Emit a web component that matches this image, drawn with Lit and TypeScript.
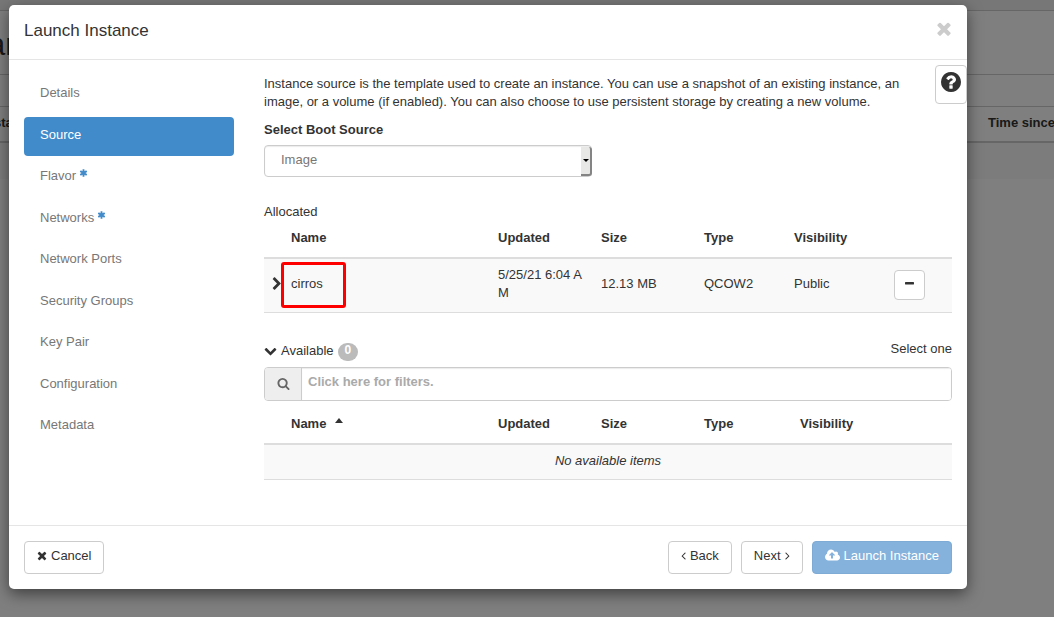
import { LitElement, html, css, nothing } from "lit";
import { customElement } from "lit/decorators.js";
import { classMap } from "lit/directives/class-map.js";

interface Glyph {
  box: string;
  d: string;
}

const GLYPHS: Record<string, Glyph> = {
  times: {
    box: "192 128 1408 1792",
    d: "M1490 1322q0 40-28 68l-136 136q-28 28-68 28t-68-28l-294-294-294 294q-28 28-68 28t-68-28l-136-136q-28-28-28-68t28-68l294-294-294-294q-28-28-28-68t28-68l136-136q28-28 68-28t68 28l294 294 294-294q28-28 68-28t68 28l136 136q28 28 28 68t-28 68l-294 294 294 294q28 28 28 68z",
  },
  chevronRight: {
    box: "256 0 1280 1792",
    d: "M1363 877l-742 742q-19 19-45 19t-45-19l-166-166q-19-19-19-45t19-45l531-531-531-531q-19-19-19-45t19-45l166-166q19-19 45-19t45 19l742 742q19 19 19 45t-19 45z",
  },
  chevronDown: {
    box: "0 128 1792 1792",
    d: "M1683 808l-742 741q-19 19-45 19t-45-19l-742-741q-19-19-19-45.500t19-45.500l166-165q19-19 45-19t45 19l531 531 531-531q19-19 45-19t45 19l166 165q19 19 19 45.500t-19 45.500z",
  },
  search: {
    box: "0 128 1792 1792",
    d: "M1216 832q0-185-131.500-316.500t-316.500-131.500-316.500 131.500-131.500 316.500 131.500 316.500 316.500 131.500 316.500-131.500 131.500-316.500zm512 832q0 52-38 90t-90 38q-54 0-90-38l-343-342q-179 124-399 124-143 0-273.500-55.500t-225-150-150-225-55.500-273.500 55.500-273.500 150-225 225-150 273.500-55.500 273.500 55.500 225 150 150 225 55.500 273.500q0 220-124 399l343 343q37 37 37 90z",
  },
  question: {
    box: "128 128 1536 1536",
    d: "M1024 1376v-192q0-14-9-23t-23-9h-192q-14 0-23 9t-9 23v192q0 14 9 23t23 9h192q14 0 23-9t9-23zm256-672q0-88-55.500-163t-138.500-116-170-41q-243 0-371 213-15 24 8 42l132 100q7 6 19 6 16 0 25-12 53-68 86-92 34-24 86-24 48 0 85.500 26t37.500 59q0 38-20 61t-68 45q-63 28-115.500 86.500t-52.500 125.500v36q0 14 9 23t23 9h192q14 0 23-9t9-23q0-19 21.500-49.500t54.500-49.500q32-18 49-28.500t46-35 44.500-48 28-60.500 12.500-81zm384 192q0 209-103 385.500t-279.500 279.500-385.500 103-385.500-103-279.500-279.500-103-385.500 103-385.500 279.500-279.500 385.500-103 385.500 103 279.500 279.500 103 385.500z",
  },
  minus: {
    box: "192 128 1408 1792",
    d: "M1600 736v192q0 40-28 68t-68 28h-1216q-40 0-68-28t-28-68v-192q0-40 28-68t68-28h1216q40 0 68 28t28 68z",
  },
  angleLeft: {
    box: "544 128 704 1792",
    d: "M1203 544q0 13-10 23l-393 393 393 393q10 10 10 23t-10 23l-50 50q-10 10-23 10t-23-10l-466-466q-10-10-10-23t10-23l466-466q10-10 23-10t23 10l50 50q10 10 10 23z",
  },
  angleRight: {
    box: "544 128 704 1792",
    d: "M1171 960q0 13-10 23l-466 466q-10 10-23 10t-23-10l-50-50q-10-10-10-23t10-23l393-393-393-393q-10-10-10-23t10-23l50-50q10-10 23-10t23 10l466 466q10 10 10 23z",
  },
  asterisk: {
    box: "192 128 1408 1536",
    d: "M1546 1050q46 26 59.500 77.500t-12.500 97.500l-64 110q-26 46-77.500 59.500t-97.500-12.500l-266-153v307q0 52-38 90t-90 38h-128q-52 0-90-38t-38-90v-307l-266 153q-46 26-97.500 12.500t-77.500-59.500l-64-110q-26-46-12.500-97.500t59.500-77.500l266-154-266-154q-46-26-59.500-77.500t12.500-97.500l64-110q26-46 77.500-59.500t97.500 12.500l266 153v-307q0-52 38-90t90-38h128q52 0 90 38t38 90v307l266-153q46-26 97.500-12.500t77.500 59.500l64 110q26 46 12.500 97.500t-59.500 77.500l-266 154z",
  },
  cloudUpload: {
    box: "-64 64 1920 1792",
    d: "M1216 864q0-14-9-23l-352-352q-9-9-23-9t-23 9l-351 351q-10 12-10 24 0 14 9 23t23 9h224v352q0 13 9.500 22.500t22.500 9.500h192q13 0 22.500-9.500t9.500-22.500v-352h224q13 0 22.500-9.500t9.500-22.500zm640 288q0 159-112.500 271.500t-271.500 112.500h-1088q-185 0-316.500-131.500t-131.500-316.500q0-130 70-240t188-165q-2-30-2-43 0-212 150-362t362-150q156 0 285.500 87t188.500 231q71-62 166-62 106 0 181 75t75 181q0 76-41 138 130 31 213.500 135.500t83.500 238.500z",
  },
  caretUp: { box: "0 0 8 5", d: "M0 5L4 0L8 5z" },
};

const icon = (name: string, width: number, height: number) => html`<svg
  class="icon"
  width=${width}
  height=${height}
  viewBox=${GLYPHS[name].box}
  aria-hidden="true"
><path fill="currentColor" d=${GLYPHS[name].d}></path></svg>`;

const STEPS = [
  { label: "Details" },
  { label: "Source", active: true },
  { label: "Flavor", required: true },
  { label: "Networks", required: true },
  { label: "Network Ports" },
  { label: "Security Groups" },
  { label: "Key Pair" },
  { label: "Configuration" },
  { label: "Metadata" },
];

@customElement("app-root")
export class AppRoot extends LitElement {
  static styles = css`
    :host {
      display: block;
      position: relative;
      min-height: 100vh;
      overflow: hidden;
      background: #fff;
      color: #333;
      font: 13px/18px "Liberation Sans", Arial, sans-serif;
    }
    * {
      box-sizing: border-box;
    }
    button,
    input,
    select {
      font: inherit;
      color: inherit;
      margin: 0;
    }
    .icon {
      display: block;
      flex: none;
    }

    /* page under the dialog */
    .topbar {
      height: 11px;
      background: #efefef;
      border-bottom: 1px solid #ccc;
    }
    .page-title {
      height: 64px;
      border-bottom: 1px solid #ccc;
      font-size: 31px;
      line-height: 36px;
      margin: 0;
      padding-top: 16px;
      font-weight: 400;
      text-indent: -12px;
    }
    .toolbar {
      height: 32px;
      border-bottom: 1px solid #ccc;
    }
    .page-head {
      display: flex;
      justify-content: space-between;
      height: 36px;
      padding-top: 7px;
      border-bottom: 2px solid #ccc;
      font-weight: 700;
      white-space: nowrap;
    }
    .page-head span:first-child {
      text-indent: -6px;
    }
    .page-head span:last-child {
      width: 66px;
    }
    .page-row {
      height: 36px;
      background: #f9f9f9;
    }

    .backdrop {
      position: absolute;
      inset: 0;
      background: rgba(0, 0, 0, 0.5);
      padding: 5px 87px 28px 9px;
    }
    .dialog {
      position: relative;
      background: #fff;
      border-radius: 5px;
      box-shadow: 0 5px 15px rgba(0, 0, 0, 0.5);
    }
    .header {
      display: flex;
      justify-content: space-between;
      align-items: center;
      padding: 14px 15px 16px;
      border-bottom: 1px solid #e5e5e5;
    }
    .title {
      margin: 0;
      font-size: 17px;
      line-height: 24px;
      font-weight: 400;
    }
    .close {
      display: flex;
      border: 0;
      padding: 0 0 2px;
      background: none;
      color: #ccc;
    }
    .help {
      position: absolute;
      top: 60px;
      right: 0;
      width: 32px;
      height: 39px;
      display: flex;
      justify-content: center;
      padding: 6px 0 0;
      border: 1px solid #ccc;
      border-radius: 4px;
      background: #fff;
      color: #333;
    }
    .body {
      display: flex;
      gap: 30px;
      padding: 15px 15px 45px;
    }
    .steps {
      flex: none;
      width: 210px;
      height: 371px;
      margin: 0;
      padding: 0;
      list-style: none;
      display: flex;
      flex-direction: column;
      justify-content: space-between;
    }
    .step {
      display: flex;
      gap: 4px;
      padding: 9px 16px 12px;
      border-radius: 4px;
      color: #777;
      text-decoration: none;
    }
    .step.active {
      background: #428bca;
      color: #fff;
    }
    .required {
      padding-top: 2px;
      color: #428bca;
    }
    .content {
      flex: 1;
      min-width: 0;
    }
    .intro {
      margin: 0 0 10px;
      padding-right: 30px;
    }
    .boot-label {
      display: block;
      font-weight: 700;
      margin-bottom: 6px;
    }
    .select-wrap {
      position: relative;
      width: 328px;
      max-width: 100%;
      height: 32px;
      margin-bottom: 26px;
    }
    .select {
      display: block;
      appearance: none;
      width: 100%;
      height: 32px;
      padding: 0 16px 3px;
      border: 1px solid #ccc;
      border-radius: 4px;
      background: #fff;
      box-shadow: inset 0 1px 1px rgba(0, 0, 0, 0.08);
      color: #777;
    }
    .select-arrow {
      position: absolute;
      top: 2px;
      right: 0;
      width: 11px;
      height: 29px;
      display: flex;
      align-items: center;
      justify-content: center;
      background: #e8e8e6;
      border-right: 2px solid #848484;
      border-bottom: 2px solid #848484;
      border-radius: 0 3px 3px 0;
      pointer-events: none;
    }
    .select-arrow::after {
      content: "";
      border: 3px solid transparent;
      border-top-color: #000;
      border-bottom: 0;
    }
    .table {
      width: 100%;
      table-layout: fixed;
      border-collapse: separate;
      border-spacing: 0;
      text-align: left;
    }
    .table th {
      padding: 8px 0 10px;
      border-bottom: 2px solid #ddd;
      font-weight: 700;
    }
    .table td {
      padding: 7px 0 10px;
      border-bottom: 1px solid #ddd;
      background: #f9f9f9;
    }
    .col-toggle {
      width: 27px;
    }
    .col-mid {
      width: 103px;
    }
    .col-type {
      width: 90px;
    }
    .col-type-wide {
      width: 96px;
    }
    .col-vis {
      width: 100px;
    }
    .col-action {
      width: 58px;
    }
    .col-action-narrow {
      width: 52px;
    }
    .table .wrap {
      padding-right: 16px;
      word-break: break-all;
    }
    .table .empty {
      padding: 7px 0 9px;
      text-align: center;
      font-style: italic;
    }
    .toggle {
      display: flex;
      padding: 0 0 0 8px;
      border: 0;
      background: none;
    }
    .marked {
      position: relative;
    }
    .mark {
      position: absolute;
      top: 3px;
      left: -10px;
      width: 65px;
      height: 46px;
      border: 3px solid #f00;
      border-radius: 3px;
    }
    .btn {
      display: inline-flex;
      align-items: center;
      gap: 4px;
      height: 33px;
      padding: 0 12px 3px;
      border: 1px solid #ccc;
      border-radius: 4px;
      background: #fff;
      white-space: nowrap;
    }
    .btn.small {
      display: flex;
      height: 30px;
      margin-top: 2px;
      padding: 0 10px 2px;
    }
    .btn.primary {
      background: #85b2dc;
      border-color: #7dabd6;
      color: #fff;
    }
    .available {
      display: flex;
      justify-content: space-between;
      margin-top: 27px;
      padding-bottom: 7px;
    }
    .available-title {
      display: flex;
      align-items: flex-start;
      gap: 4px;
      padding-top: 2px;
    }
    .available-title .icon {
      margin-top: 3px;
    }
    .badge {
      height: 18px;
      margin-top: 1px;
      margin-bottom: -1px;
      padding: 0 7px;
      border-radius: 9px;
      background: #bbb;
      color: #fff;
      font-size: 12px;
      line-height: 15px;
      font-weight: 700;
    }
    .filter {
      display: flex;
      height: 34px;
      margin-bottom: 6px;
      border: 1px solid #ccc;
      border-radius: 4px;
      overflow: hidden;
    }
    .filter-icon {
      flex: none;
      display: flex;
      align-items: center;
      justify-content: center;
      width: 37px;
      background: #eee;
      border-right: 1px solid #ccc;
      color: #666;
    }
    .filter-input {
      flex: 1;
      min-width: 0;
      border: 0;
      padding: 0 6px 5px;
      background: #fff;
      box-shadow: inset 0 1px 1px rgba(0, 0, 0, 0.08);
      font-weight: 700;
    }
    .filter-input::placeholder {
      color: #aaa;
      opacity: 1;
    }
    .sorted {
      display: flex;
      gap: 9px;
    }
    .sorted .icon {
      margin-top: 3px;
    }
    .footer {
      display: flex;
      gap: 9px;
      padding: 15px;
      border-top: 1px solid #e5e5e5;
    }
    .footer .btn:first-child {
      margin-right: auto;
    }
  `;

  private headCells(wide: boolean) {
    return html`
      <th scope="col" class="col-toggle"></th>
      <th scope="col">
        ${wide
          ? html`<div class="sorted">Name ${icon("caretUp", 8, 5)}</div>`
          : "Name"}
      </th>
      <th scope="col" class="col-mid">Updated</th>
      <th scope="col" class="col-mid">Size</th>
      <th scope="col" class=${wide ? "col-type-wide" : "col-type"}>Type</th>
      <th scope="col" class="col-vis">Visibility</th>
      <th scope="col" class=${wide ? "col-action-narrow" : "col-action"}></th>
    `;
  }

  render() {
    return html`
      <div aria-hidden="true">
        <div class="topbar"></div>
        <p class="page-title">an</p>
        <div class="toolbar"></div>
        <div class="page-head"><span>sta</span><span>Time since</span></div>
        <div class="page-row"></div>
      </div>
      <div class="backdrop">
        <section class="dialog" role="dialog" aria-labelledby="title">
          <header class="header">
            <h1 class="title" id="title">Launch Instance</h1>
            <button class="close" aria-label="Close">${icon("times", 16, 20)}</button>
          </header>
          <button class="help" aria-label="Help">${icon("question", 20, 20)}</button>
          <div class="body">
            <ul class="steps">
              ${STEPS.map(
                (s) => html`<li>
                  <a href="#" class=${classMap({ step: true, active: !!s.active })}
                    >${s.label}${s.required
                      ? html`<span class="required">${icon("asterisk", 7, 8)}</span>`
                      : nothing}</a
                  >
                </li>`
              )}
            </ul>
            <div class="content">
              <p class="intro">
                Instance source is the template used to create an instance. You can use a
                snapshot of an existing instance, an image, or a volume (if enabled). You can
                also choose to use persistent storage by creating a new volume.
              </p>
              <label class="boot-label" for="boot">Select Boot Source</label>
              <div class="select-wrap">
                <select class="select" id="boot">
                  <option>Image</option>
                </select>
                <span class="select-arrow"></span>
              </div>
              <div>Allocated</div>
              <table class="table">
                <thead>
                  <tr>${this.headCells(false)}</tr>
                </thead>
                <tbody>
                  <tr>
                    <td>
                      <button class="toggle" aria-label="Show details">
                        ${icon("chevronRight", 10, 14)}
                      </button>
                    </td>
                    <td class="marked">cirros<span class="mark"></span></td>
                    <td class="wrap">5/25/21 6:04 AM</td>
                    <td>12.13 MB</td>
                    <td>QCOW2</td>
                    <td>Public</td>
                    <td>
                      <button class="btn small" aria-label="Remove">
                        ${icon("minus", 9, 13)}
                      </button>
                    </td>
                  </tr>
                </tbody>
              </table>
              <div class="available">
                <div class="available-title">
                  ${icon("chevronDown", 13, 13)} Available <span class="badge">0</span>
                </div>
                <span>Select one</span>
              </div>
              <div class="filter">
                <span class="filter-icon">${icon("search", 13, 13)}</span>
                <input
                  class="filter-input"
                  type="text"
                  aria-label="Filters"
                  placeholder="Click here for filters."
                />
              </div>
              <table class="table">
                <thead>
                  <tr>${this.headCells(true)}</tr>
                </thead>
                <tbody>
                  <tr>
                    <td class="empty" colspan="7">No available items</td>
                  </tr>
                </tbody>
              </table>
            </div>
          </div>
          <footer class="footer">
            <button class="btn">${icon("times", 10, 13)} Cancel</button>
            <button class="btn">${icon("angleLeft", 5, 13)} Back</button>
            <button class="btn">Next ${icon("angleRight", 5, 13)}</button>
            <button class="btn primary">${icon("cloudUpload", 15, 14)} Launch Instance</button>
          </footer>
        </section>
      </div>
    `;
  }
}
